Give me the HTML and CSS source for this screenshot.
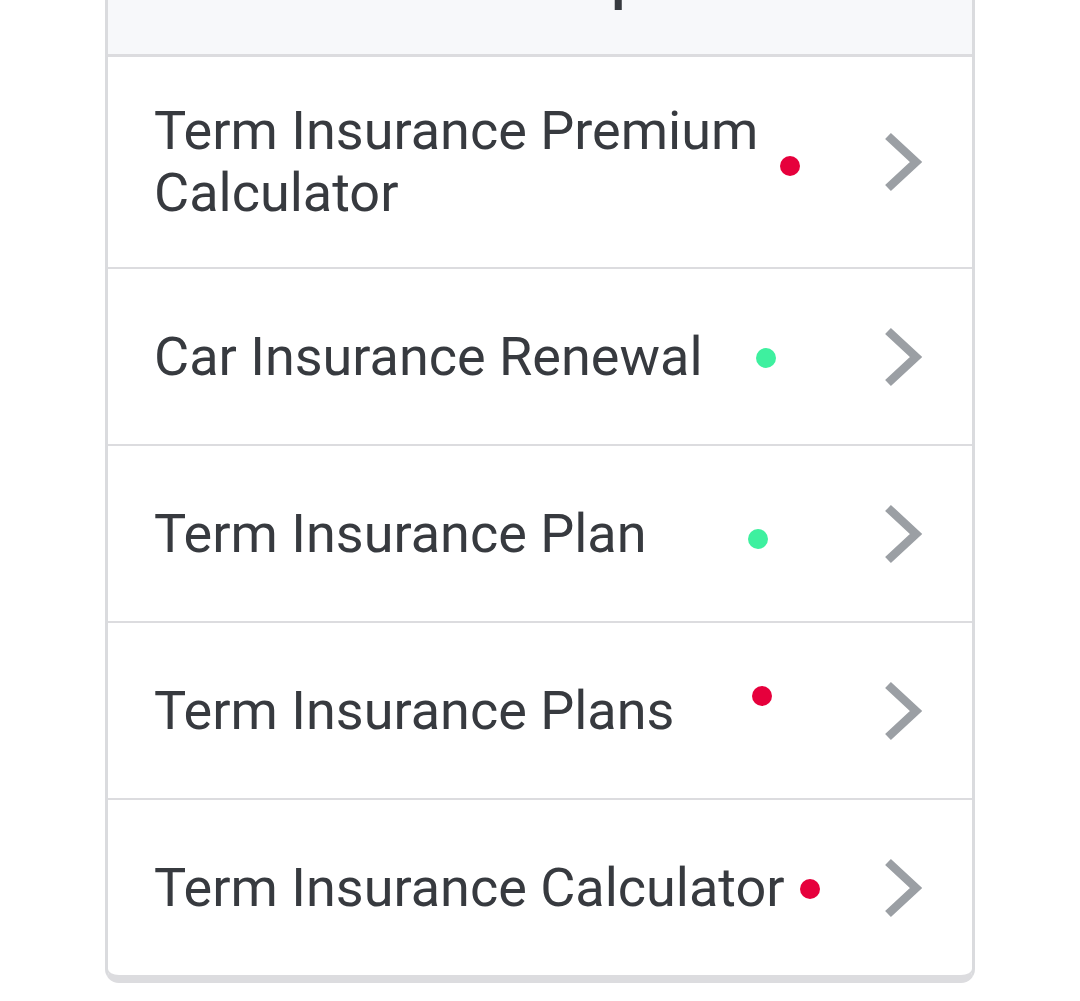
FILE: index.html
```html
<!DOCTYPE html>
<html lang="en">
<head>
<meta charset="utf-8">
<title>Related Topics</title>
<link rel="stylesheet" href="styles.css">
</head>
<body>
<div class="card">
  <div class="card-header">Related Topics</div>
  <a class="row" href="#">
    <span class="label">Term Insurance Premium Calculator</span>
    <span class="dot dot-red dot-1"></span>
    <svg class="chev" viewBox="0 0 40 60" width="40" height="60"><polyline points="5,4 33,30 5,56"/></svg>
  </a>
  <a class="row" href="#">
    <span class="label">Car Insurance Renewal</span>
    <span class="dot dot-green dot-2"></span>
    <svg class="chev" viewBox="0 0 40 60" width="40" height="60"><polyline points="5,4 33,30 5,56"/></svg>
  </a>
  <a class="row" href="#">
    <span class="label">Term Insurance Plan</span>
    <span class="dot dot-green dot-3"></span>
    <svg class="chev" viewBox="0 0 40 60" width="40" height="60"><polyline points="5,4 33,30 5,56"/></svg>
  </a>
  <a class="row" href="#">
    <span class="label">Term Insurance Plans</span>
    <span class="dot dot-red dot-4"></span>
    <svg class="chev" viewBox="0 0 40 60" width="40" height="60"><polyline points="5,4 33,30 5,56"/></svg>
  </a>
  <a class="row row-last" href="#">
    <span class="label">Term Insurance Calculator</span>
    <span class="dot dot-red dot-5"></span>
    <svg class="chev" viewBox="0 0 40 60" width="40" height="60"><polyline points="5,4 33,30 5,56"/></svg>
  </a>
</div>
</body>
</html>
```

FILE: styles.css
```css
html, body {
  margin: 0;
  padding: 0;
  background: #ffffff;
}
body {
  font-family: Roboto, "Noto Sans", "Liberation Sans", sans-serif;
  color: #373a3f;
  overflow: hidden;
}
.card {
  width: 870px;
  box-sizing: border-box;
  margin: -60px auto 0;
  border: 3px solid #dadbde;
  border-bottom: 8px solid #dcdcdf;
  border-radius: 0 0 14px 14px;
  background: #ffffff;
  overflow: hidden;
}
.card-header {
  background: #f7f8fa;
  height: 114px;
  box-sizing: border-box;
  padding-top: 15px;
  font-size: 50px;
  line-height: 50px;
  font-weight: 700;
  text-align: center;
  color: #373a3f;
  border-bottom: 3px solid #dcdcdf;
}
.row {
  position: relative;
  display: flex;
  align-items: center;
  min-height: 177px;
  box-sizing: border-box;
  padding: 43px 52px 43px 46px;
  border-bottom: 2px solid #dcdcdf;
  text-decoration: none;
  color: inherit;
}
.row-last {
  border-bottom: 0;
  min-height: 175px;
}
.label {
  flex: 1;
  padding-right: 90px;
  font-size: 54px;
  line-height: 62px;
  color: #373a3f;
}
.chev {
  flex: none;
  display: block;
  margin-right: -3px;
}
.chev polyline {
  fill: none;
  stroke: #9b9fa4;
  stroke-width: 8.5;
  stroke-linejoin: miter;
  stroke-linecap: butt;
}
.dot {
  position: absolute;
  width: 20px;
  height: 20px;
  border-radius: 50%;
}
.dot-red { background: #e6003c; }
.dot-green { background: #3ef09f; }
.dot-1 { left: 672px; top: 99px; }
.dot-2 { left: 648px; top: 79px; }
.dot-3 { left: 640px; top: 83px; }
.dot-4 { left: 644px; top: 63px; }
.dot-5 { left: 692px; top: 79px; }
```
